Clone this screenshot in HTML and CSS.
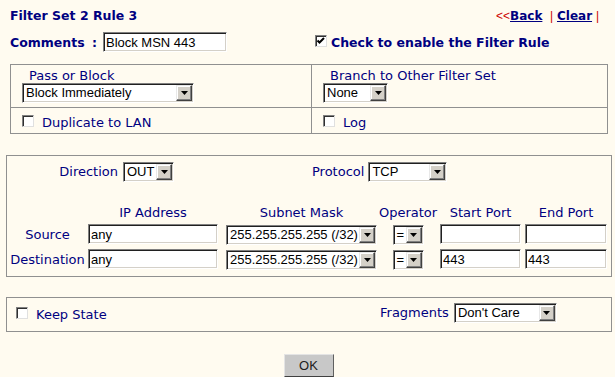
FILE: index.html
```html
<!DOCTYPE html>
<html>
<head>
    <title>Filter Set 2 Rule 3</title>
    <link rel="stylesheet" href="styles.css">
</head>
<body>
    <div class="top">
        <div class="title">Filter Set 2 Rule 3</div>
        <div class="nav"><span class="sep">&lt;&lt;</span><a href="#">Back</a>&nbsp; <span class="sep">|</span> <a href="#">Clear</a> <span class="sep">|</span></div>
    </div>

    <div class="comments-row">
        <div class="comments">
            <span class="bold-label">Comments :</span>
            <input class="text w-comment" type="text" value="Block MSN 443">
        </div>
        <div class="enable">
            <span class="check"><svg width="10" height="10" viewBox="0 0 10 10"><polyline points="1.5,4.5 3.5,6.5 8,2" fill="none" stroke="#000" stroke-width="2"/></svg></span>
            <span class="bold-label">Check to enable the Filter Rule</span>
        </div>
    </div>

    <!-- pass/block and branch -->
    <div class="box action-box">
        <div class="cell">
            <div class="cell-label">Pass or Block</div>
            <span class="select w-action"><span class="val">Block Immediately</span><span class="arrow"><svg width="7" height="4" viewBox="0 0 7 4"><polygon points="0,0 7,0 3.5,4" fill="#000"/></svg></span></span>
        </div>
        <div class="cell right">
            <div class="cell-label">Branch to Other Filter Set</div>
            <span class="select w-branch"><span class="val">None</span><span class="arrow"><svg width="7" height="4" viewBox="0 0 7 4"><polygon points="0,0 7,0 3.5,4" fill="#000"/></svg></span></span>
        </div>
        <div class="cell opt bottom">
            <span class="check"></span>
            <span class="opt-label">Duplicate to LAN</span>
        </div>
        <div class="cell opt bottom right">
            <span class="check"></span>
            <span class="opt-label">Log</span>
        </div>
    </div>

    <!-- addresses -->
    <div class="box addr-box">
        <div class="dir-row">
            <div class="dir-half">
                <span class="dir-label">Direction</span>
                <span class="select w-dir"><span class="val">OUT</span><span class="arrow"><svg width="7" height="4" viewBox="0 0 7 4"><polygon points="0,0 7,0 3.5,4" fill="#000"/></svg></span></span>
            </div>
            <div class="proto-half">
                <span class="proto-label">Protocol</span>
                <span class="select w-proto"><span class="val">TCP</span><span class="arrow"><svg width="7" height="4" viewBox="0 0 7 4"><polygon points="0,0 7,0 3.5,4" fill="#000"/></svg></span></span>
            </div>
        </div>

        <div class="addr-grid">
            <div></div>
            <div class="hd c-ip">IP Address</div>
            <div class="hd c-mask">Subnet Mask</div>
            <div class="hd c-op">Operator</div>
            <div class="hd c-sp">Start Port</div>
            <div class="hd c-ep">End Port</div>

            <div class="row-label">Source</div>
            <div class="c-ip"><input class="text full" type="text" value="any"></div>
            <div class="c-mask"><span class="select full"><span class="val">255.255.255.255 (/32)</span><span class="arrow"><svg width="7" height="4" viewBox="0 0 7 4"><polygon points="0,0 7,0 3.5,4" fill="#000"/></svg></span></span></div>
            <div class="c-op"><span class="select w-op"><span class="val">=</span><span class="arrow"><svg width="7" height="4" viewBox="0 0 7 4"><polygon points="0,0 7,0 3.5,4" fill="#000"/></svg></span></span></div>
            <div class="c-sp"><input class="text full" type="text" value=""></div>
            <div class="c-ep"><input class="text full" type="text" value=""></div>

            <div class="row-label">Destination</div>
            <div class="c-ip"><input class="text full" type="text" value="any"></div>
            <div class="c-mask"><span class="select full"><span class="val">255.255.255.255 (/32)</span><span class="arrow"><svg width="7" height="4" viewBox="0 0 7 4"><polygon points="0,0 7,0 3.5,4" fill="#000"/></svg></span></span></div>
            <div class="c-op"><span class="select w-op"><span class="val">=</span><span class="arrow"><svg width="7" height="4" viewBox="0 0 7 4"><polygon points="0,0 7,0 3.5,4" fill="#000"/></svg></span></span></div>
            <div class="c-sp"><input class="text full" type="text" value="443"></div>
            <div class="c-ep"><input class="text full" type="text" value="443"></div>
        </div>
    </div>

    <!-- state -->
    <div class="box state-box">
        <div class="keep">
            <span class="check"></span>
            <span class="opt-label">Keep State</span>
        </div>
        <span class="frag-label">Fragments</span>
        <span class="select w-frag"><span class="val">Don't Care</span><span class="arrow"><svg width="7" height="4" viewBox="0 0 7 4"><polygon points="0,0 7,0 3.5,4" fill="#000"/></svg></span></span>
    </div>

    <div class="actions">
        <button class="ok-button">OK</button>
    </div>
</body>
</html>
```

FILE: styles.css
```css
body {
    margin: 0;
    background: #fffbf0;
    font-family: 'DejaVu Sans', Verdana, sans-serif;
    font-size: 13px;
    color: #000080;
}

.top {
    display: flex;
    justify-content: space-between;
    align-items: baseline;
    padding: 8px 16px 0 10px;
    line-height: 16px;
    height: 16px;
}

.title {
    font-weight: bold;
    font-size: 12.5px;
}

.nav {
    font-size: 12px;
}

.nav a {
    color: #000080;
    font-weight: bold;
}

.nav .sep {
    color: #cc0000;
    font-family: 'Liberation Sans', Arial, sans-serif;
}

.comments-row {
    display: grid;
    grid-template-columns: 305px 1fr;
    align-items: baseline;
    height: 20px;
    margin-top: 8px;
    padding-left: 10px;
}

.comments,
.enable {
    display: flex;
    align-items: baseline;
}

.bold-label {
    font-weight: bold;
    font-size: 12.5px;
    line-height: 15px;
}

.comments .bold-label {
    margin-right: 6px;
    word-spacing: 3px;
}

.enable .check {
    margin-right: 4px;
}

/* form controls */
.text {
    box-sizing: border-box;
    height: 20px;
    margin: 0;
    padding: 0 2px;
    border: 1px solid;
    border-color: #808080 #ffffff #ffffff #808080;
    box-shadow: inset 1px 1px 0 #202020, inset -1px -1px 0 #d4d0c8;
    background: #fff;
    font-family: 'Liberation Sans', Arial, sans-serif;
    font-size: 13px;
    color: #000;
    outline: none;
}

.select {
    box-sizing: border-box;
    display: inline-flex;
    align-items: center;
    height: 20px;
    padding: 1px;
    border: 1px solid;
    border-color: #808080 #ffffff #ffffff #808080;
    box-shadow: inset 1px 1px 0 #202020, inset -1px -1px 0 #d4d0c8;
    background: #fff;
    font-family: 'Liberation Sans', Arial, sans-serif;
    font-size: 13px;
    color: #000;
    vertical-align: top;
}

.select .val {
    flex: 1;
    min-width: 0;
    padding-left: 2px;
    line-height: 16px;
    white-space: nowrap;
    overflow: hidden;
}

.select .arrow {
    box-sizing: border-box;
    flex: 0 0 16px;
    height: 16px;
    display: flex;
    align-items: center;
    justify-content: center;
    background: #d4d0c8;
    border: 1px solid;
    border-color: #e8e8e8 #404040 #404040 #e8e8e8;
    box-shadow: inset -1px -1px 0 #808080, inset 1px 1px 0 #ffffff;
}

.select .arrow svg {
    display: block;
}

.check {
    box-sizing: border-box;
    display: inline-block;
    width: 12px;
    height: 12px;
    border: 1px solid;
    border-color: #808080 #e0e0e0 #e0e0e0 #808080;
    box-shadow: inset 1px 1px 0 #303030;
    background: #fff;
    flex: 0 0 auto;
}

.check svg {
    display: block;
}

.w-comment { width: 124px; }
.w-action { width: 172px; }
.w-branch { width: 65px; }
.w-dir { width: 51px; }
.w-proto { width: 79px; }
.w-op { width: 31px; }
.w-frag { width: 103px; }
.full { width: 100%; }

/* boxes */
.box {
    border: 1px solid #909090;
}

.action-box {
    display: grid;
    grid-template-columns: 300px 1fr;
    margin: 12px 7px 0 10px;
}

.cell {
    height: 42px;
    box-sizing: border-box;
    padding: 3px 0 0 11px;
}

.cell.right {
    border-left: 1px solid #909090;
}

.cell.bottom {
    border-top: 1px solid #909090;
}

.cell-label {
    padding-left: 7px;
    line-height: 15px;
}

.cell.opt {
    display: flex;
    align-items: baseline;
    height: 26px;
    padding: 5px 0 0 11px;
    line-height: 20px;
}

.opt-label {
    margin-left: 8px;
}

.addr-box {
    margin: 21px 3px 0 6px;
    padding: 6px 0 7px 0;
}

.dir-row {
    display: flex;
    align-items: baseline;
    height: 20px;
}

.dir-half {
    flex: 0 0 302px;
    display: flex;
    align-items: baseline;
}

.dir-label {
    width: 114px;
    box-sizing: border-box;
    padding-right: 3px;
    text-align: right;
    margin-right: 2px;
    line-height: 15px;
}

.proto-half {
    display: flex;
    align-items: baseline;
    padding-left: 3px;
}

.proto-label {
    margin-right: 4px;
    line-height: 15px;
}

.addr-grid {
    display: grid;
    grid-template-columns: 81px 138px 153px 61px 85px 82px;
    grid-template-rows: 14px 20px 20px;
    row-gap: 5px;
    align-items: baseline;
    margin-top: 23px;
    line-height: 15px;
}

.addr-grid > div {
    display: flex;
    align-items: baseline;
    justify-content: center;
}

.c-ip { padding-right: 8px; }
.c-mask { padding-right: 2px; }
.c-op { padding-right: 3px; }
.c-sp { padding-right: 4px; }

.state-box {
    display: flex;
    align-items: baseline;
    margin: 20px 3px 0 6px;
    padding: 5px 0 6px 0;
    line-height: 15px;
}

.keep {
    flex: 0 0 364px;
    align-self: flex-start;
    display: flex;
    align-items: baseline;
    padding: 2px 0 0 9px;
    line-height: 20px;
}

.frag-label {
    margin-right: 5px;
}

.actions {
    display: flex;
    justify-content: center;
    margin-top: 22px;
    padding-left: 2px;
}

.ok-button {
    width: 50px;
    height: 23px;
    padding: 0;
    background: #c8c8c8;
    border: 1px solid;
    border-color: #e4e4e4 #606060 #404040 #e4e4e4;
    font-family: 'Liberation Sans', Arial, sans-serif;
    font-size: 13px;
    color: #202020;
}
```
